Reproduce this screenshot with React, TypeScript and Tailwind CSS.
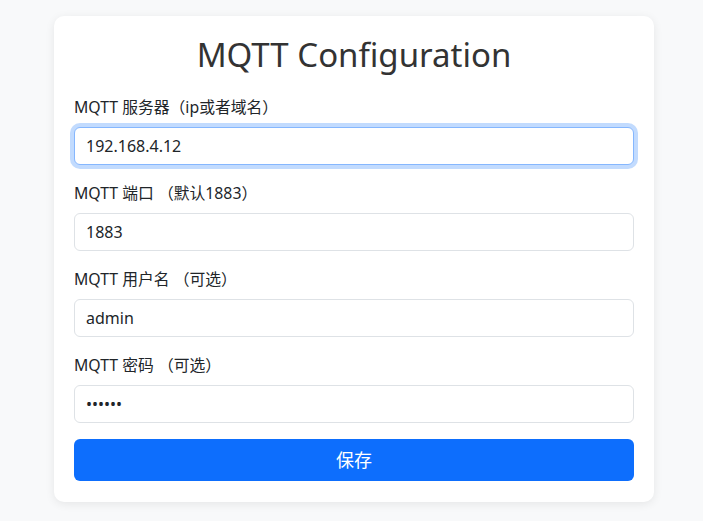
export default function App() {
  const font = { fontFamily: '"Noto Sans", "Noto Sans CJK SC", sans-serif' };
  const fields = [
    { label: "MQTT 服务器（ip或者域名）", value: "192.168.4.12", focus: true, type: "text" },
    { label: "MQTT 端口 （默认1883）", value: "1883", focus: false, type: "text" },
    { label: "MQTT 用户名 （可选）", value: "admin", focus: false, type: "text" },
    { label: "MQTT 密码 （可选）", value: "123456", focus: false, type: "password" },
  ];
  return (
    <div className="min-h-[521px] w-full bg-[#f8f9fa] pt-4" style={font}>
      <div className="ml-[54px] w-[600px] rounded-[10px] bg-white px-5 pt-[17px] pb-[21px] shadow-[0_2px_10px_rgba(0,0,0,0.08)]">
        <h1 className="text-center text-[33px] leading-[44px] text-[#333333]">MQTT Configuration</h1>
        <div className="mt-[18px] flex flex-col">
          {fields.map((f, i) => (
            <div key={i} className="mb-[16px] flex flex-col">
              <label className="mb-[8px] text-[15.8px] leading-[24px] text-[#212529]">{f.label}</label>
              <input
                readOnly
                type={f.type}
                value={f.value}
                className={
                  "h-[38px] w-full rounded-[6px] border bg-white pl-[11px] pr-3 text-[16px] text-[#212529] outline-none " +
                  (f.focus
                    ? "border-[#86b7fe] shadow-[0_0_0_4px_rgba(13,110,253,0.25)]"
                    : "border-[#dee2e6]")
                }
              />
            </div>
          ))}
          <button className="h-[42px] w-full rounded-[6px] bg-[#0d6efd] text-[18px] text-white">保存</button>
        </div>
      </div>
    </div>
  );
}
